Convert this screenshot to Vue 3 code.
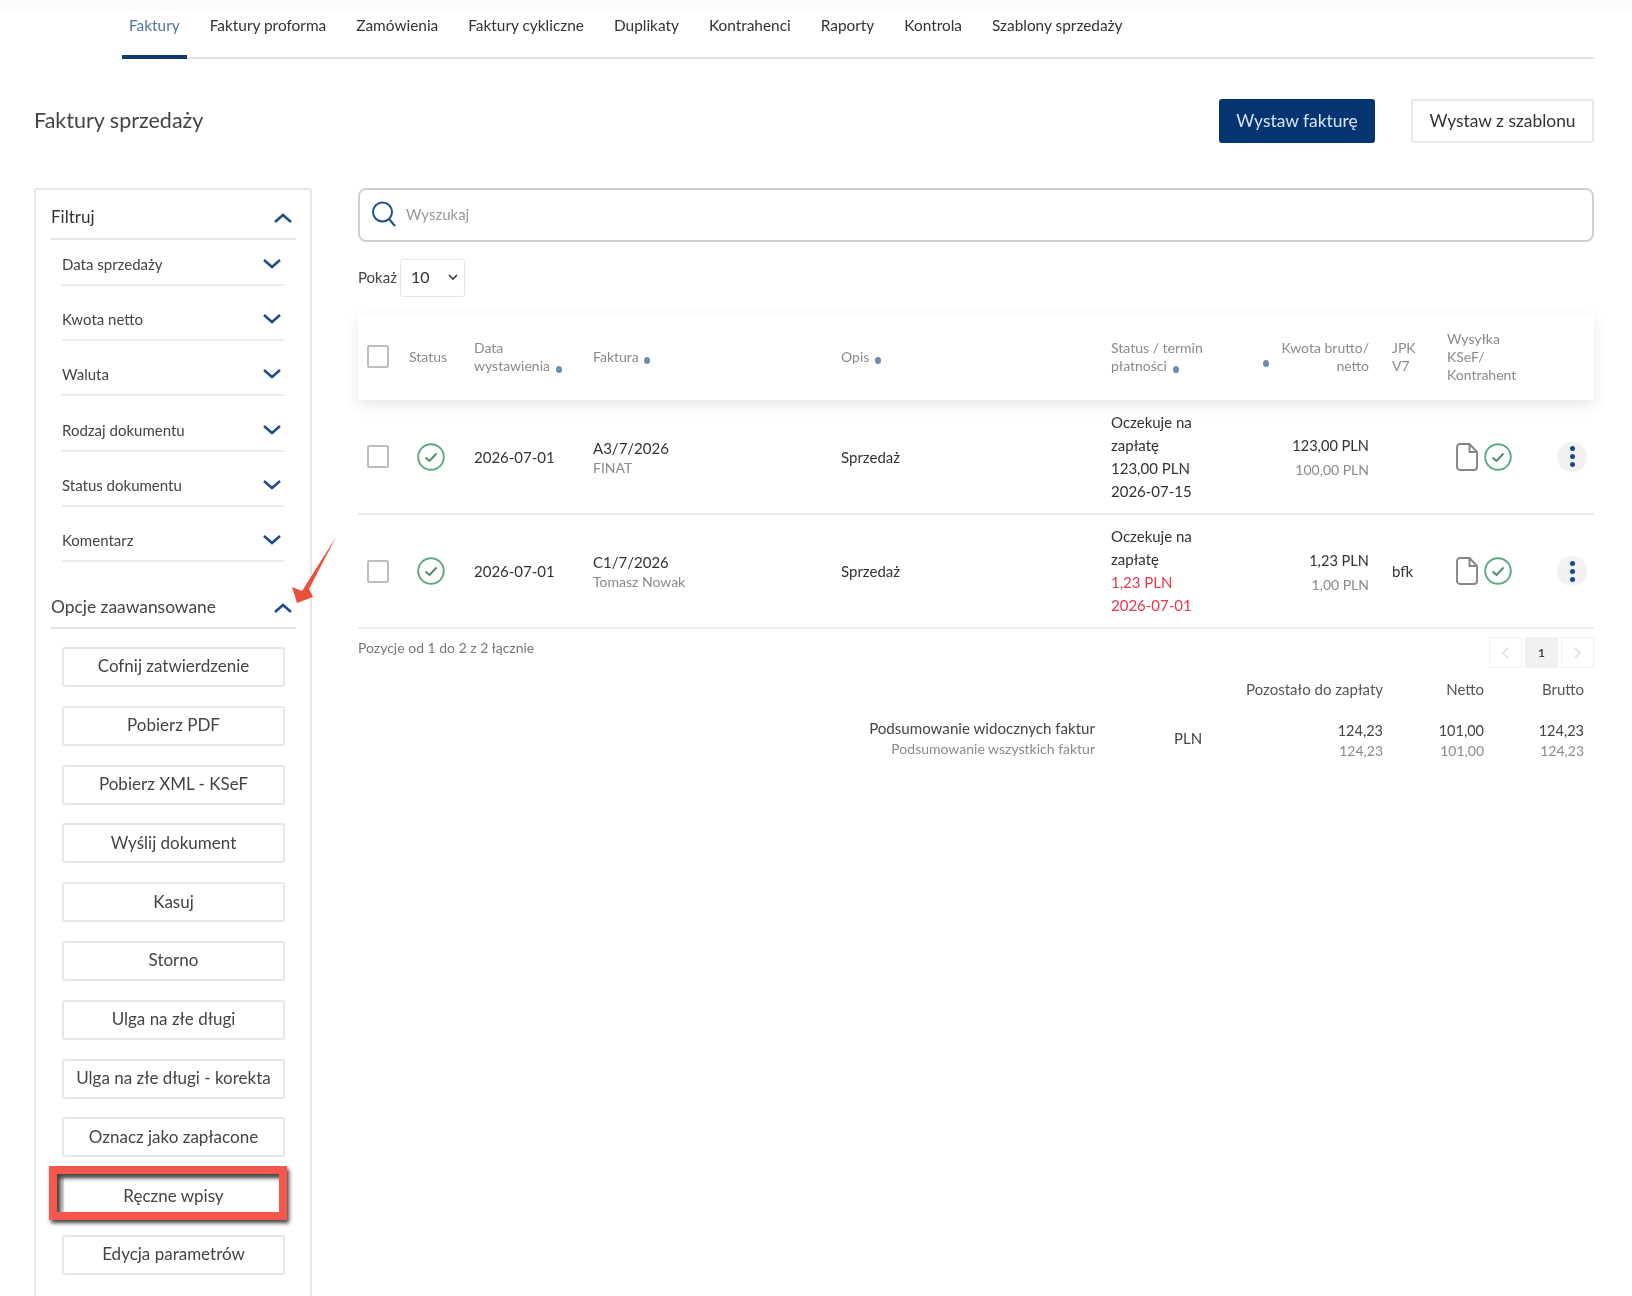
<template>
  <div class="page">
    <nav class="tabs">
      <a v-for="(tab, i) in tabs" :key="tab" class="tab" :class="{ active: i === 0 }">{{ tab }}</a>
    </nav>

    <header class="top">
      <h1>Faktury sprzedaży</h1>
      <div class="top-actions">
        <button class="btn primary">Wystaw fakturę</button>
        <button class="btn">Wystaw z szablonu</button>
      </div>
    </header>

    <div class="main">
      <aside class="side">
        <div class="side-head">
          <span>Filtruj</span>
          <svg class="chev" viewBox="0 0 20 12"><path d="M2 10l8-7l8 7" /></svg>
        </div>
        <div v-for="f in filters" :key="f" class="filter">
          <span>{{ f }}</span>
          <svg class="chev" viewBox="0 0 20 12"><path d="M2 2l8 7l8-7" /></svg>
        </div>
        <div class="side-head advanced">
          <span>Opcje zaawansowane</span>
          <svg class="chev" viewBox="0 0 20 12"><path d="M2 10l8-7l8 7" /></svg>
        </div>
        <div class="side-btns">
          <div v-for="a in actions" :key="a" class="side-btn">
            {{ a }}
            <i v-if="a === 'Ręczne wpisy'" class="mark"></i>
          </div>
        </div>
      </aside>

      <section class="content">
        <div class="search">
          <svg width="28" height="28" viewBox="0 0 28 28" fill="none" stroke="#1f5288" stroke-width="2">
            <circle cx="12.5" cy="12" r="9.5" />
            <path d="M19 19l6 7" />
          </svg>
          <span>Wyszukaj</span>
        </div>

        <div class="show">
          <span>Pokaż</span>
          <div class="select">
            10
            <svg width="10" height="6" viewBox="0 0 10 6" fill="none" stroke="#333" stroke-width="1.6"><path d="M1 1l4 4l4-4" /></svg>
          </div>
        </div>

        <table class="grid">
          <colgroup>
            <col v-for="(w, i) in cols" :key="i" :style="{ width: w + 'px' }" />
          </colgroup>
          <thead>
            <tr>
              <th class="c-check"><span class="check"></span></th>
              <th>Status</th>
              <th>Data<br />wystawienia <i class="dot"></i></th>
              <th>Faktura <i class="dot"></i></th>
              <th>Opis <i class="dot"></i></th>
              <th>Status / termin<br />płatności <i class="dot"></i></th>
              <th class="c-amount">
                <i class="dot dot-left"></i>
                Kwota brutto/<br />netto
              </th>
              <th>JPK<br />V7</th>
              <th>Wysyłka<br />KSeF/<br />Kontrahent</th>
              <th></th>
            </tr>
          </thead>
          <tbody>
            <tr v-for="r in rows" :key="r.no">
              <td class="c-check"><span class="check"></span></td>
              <td>
                <svg class="ok" viewBox="0 0 28 28"><circle cx="14" cy="14" r="12.8" /><path class="tick" d="M8.5 14.5l4 3.5l7-7.5" /></svg>
              </td>
              <td>{{ r.date }}</td>
              <td>
                <div class="no">{{ r.no }}</div>
                <div class="sub">{{ r.client }}</div>
              </td>
              <td>Sprzedaż</td>
              <td class="state" :class="{ late: r.late }">
                <div>Oczekuje na zapłatę</div>
                <div class="due">{{ r.left }}</div>
                <div class="due">{{ r.term }}</div>
              </td>
              <td class="c-amount">
                <div class="gross">{{ r.gross }}</div>
                <div class="sub">{{ r.net }}</div>
              </td>
              <td>{{ r.jpk }}</td>
              <td>
                <div class="icons">
                  <svg class="doc" viewBox="0 0 22 28"><path d="M4 1h9.5l7.500 8v15a3 3 0 0 1-3 3h-14a3 3 0 0 1-3-3v-20a3 3 0 0 1 3-3zM13.500 1v8h7.500" /></svg>
                  <svg class="ok" viewBox="0 0 28 28"><circle cx="14" cy="14" r="12.8" /><path class="tick" d="M8.5 14.5l4 3.5l7-7.5" /></svg>
                </div>
              </td>
              <td>
                <span class="more"><b></b><b></b><b></b></span>
              </td>
            </tr>
          </tbody>
        </table>

        <div class="under">
          <span class="count">Pozycje od 1 do 2 z 2 łącznie</span>
          <div class="pager">
            <span class="pg">
              <svg width="7" height="12" viewBox="0 0 7 12" fill="none" stroke="#ddd" stroke-width="1.5"><path d="M6 1l-5 5l5 5" /></svg>
            </span>
            <span class="pg cur">1</span>
            <span class="pg">
              <svg width="7" height="12" viewBox="0 0 7 12" fill="none" stroke="#ddd" stroke-width="1.5"><path d="M1 1l5 5l-5 5" /></svg>
            </span>
          </div>
        </div>

        <div class="summary">
          <span></span>
          <span></span>
          <span class="s-head">Pozostało do zapłaty</span>
          <span class="s-head">Netto</span>
          <span class="s-head">Brutto</span>

          <div class="s-label">
            <div class="s-main">Podsumowanie widocznych faktur</div>
            <div class="s-sub">Podsumowanie wszystkich faktur</div>
          </div>
          <div class="s-cur">PLN</div>
          <div v-for="(v, i) in totals" :key="i" class="s-val">
            <div class="s-main">{{ v }}</div>
            <div class="s-sub">{{ v }}</div>
          </div>
        </div>
      </section>
    </div>

    <svg class="arrow" width="60" height="76" viewBox="0 0 60 76">
      <path d="M48 1L21 53L25 61L9 67L4 51L14 55Z" fill="#e8503a" />
    </svg>
  </div>
</template>

<script setup>
const tabs = [
  "Faktury",
  "Faktury proforma",
  "Zamówienia",
  "Faktury cykliczne",
  "Duplikaty",
  "Kontrahenci",
  "Raporty",
  "Kontrola",
  "Szablony sprzedaży",
];

const filters = [
  "Data sprzedaży",
  "Kwota netto",
  "Waluta",
  "Rodzaj dokumentu",
  "Status dokumentu",
  "Komentarz",
];

const actions = [
  "Cofnij zatwierdzenie",
  "Pobierz PDF",
  "Pobierz XML - KSeF",
  "Wyślij dokument",
  "Kasuj",
  "Storno",
  "Ulga na złe długi",
  "Ulga na złe długi - korekta",
  "Oznacz jako zapłacone",
  "Ręczne wpisy",
  "Edycja parametrów",
];

const cols = [51, 65, 119, 248, 270, 139, 142, 55, 103, 44];

const rows = [
  {
    date: "2026-07-01",
    no: "A3/7/2026",
    client: "FINAT",
    left: "123,00 PLN",
    term: "2026-07-15",
    gross: "123,00 PLN",
    net: "100,00 PLN",
    jpk: "",
    late: false,
  },
  {
    date: "2026-07-01",
    no: "C1/7/2026",
    client: "Tomasz Nowak",
    left: "1,23 PLN",
    term: "2026-07-01",
    gross: "1,23 PLN",
    net: "1,00 PLN",
    jpk: "bfk",
    late: true,
  },
];

const totals = ["124,23", "101,00", "124,23"];
</script>

<style>
body {
  background: #fff;
}
</style>

<style scoped>
.page {
  position: relative;
  box-sizing: border-box;
  height: 1296px;
  overflow: hidden;
  padding: 0 38px 0 34px;
  font-family: Lato, "Liberation Sans", sans-serif;
  font-size: 15px;
  color: #333;
  background: linear-gradient(#fbfbfb 8px, #fff 13px);
  filter: blur(0.6px);
}

.tabs {
  display: flex;
  gap: 16px;
  height: 59px;
  margin-left: 88px;
  box-sizing: border-box;
  border-bottom: 2px solid #e2e2e2;
}

.tab {
  height: 59px;
  box-sizing: border-box;
  padding: 16px 7px 0;
  font-size: 15.4px;
  color: #333;
}

.tab.active {
  color: #4f76a3;
  border-bottom: 4px solid #0d3a75;
}

.top {
  display: flex;
  justify-content: space-between;
  align-items: center;
  margin-top: 40px;
}

h1 {
  margin: 0 0 2px;
  font-size: 21.5px;
  font-weight: 400;
  color: #444;
}

.top-actions {
  display: flex;
  gap: 36px;
}

.btn {
  box-sizing: border-box;
  width: 183px;
  height: 44px;
  padding: 0 0 2px;
  font: inherit;
  font-size: 17.4px;
  white-space: nowrap;
  color: #333;
  background: #fff;
  border: 2px solid #e8e8e8;
  border-radius: 3px;
}

.btn.primary {
  width: 156px;
  color: #d9e4f0;
  background: #053472;
  border-color: #053472;
}

.main {
  display: flex;
  gap: 46px;
  margin-top: 45px;
}

.side {
  flex: none;
  box-sizing: border-box;
  width: 278px;
  height: 1200px;
  padding: 0 14px 0 15px;
  border: 2px solid #e6e6e6;
  border-radius: 3px;
}

.side-head {
  display: flex;
  justify-content: space-between;
  align-items: flex-end;
  box-sizing: border-box;
  height: 50px;
  padding: 0 3px 11px 0;
  border-bottom: 2px solid #e6e6e6;
  font-size: 17px;
  color: #333;
}

.side-head.advanced {
  height: 67px;
  padding-bottom: 10px;
  font-size: 17.4px;
  color: #444;
}

.filter {
  display: flex;
  justify-content: space-between;
  align-items: flex-end;
  box-sizing: border-box;
  height: 55.2px;
  margin: 0 12px 0 11px;
  padding: 0 2px 11px 0;
  border-bottom: 2px solid #ececec;
  font-size: 15px;
  color: #444;
}

.filter:nth-child(2) {
  height: 46px;
}

.chev {
  width: 20px;
  height: 12px;
  margin-bottom: 3px;
  fill: none;
  stroke: #1d4d85;
  stroke-width: 2.5;
}

.side-btns {
  display: flex;
  flex-direction: column;
  gap: 18.8px;
  margin: 18px 0 0 11px;
  width: 223px;
}

.side-btn {
  position: relative;
  display: flex;
  justify-content: center;
  align-items: center;
  box-sizing: border-box;
  height: 40px;
  padding-bottom: 2px;
  font-size: 17px;
  color: #444;
  background: #fff;
  border: 2px solid #e6e6e6;
  border-radius: 3px;
}

.mark {
  position: absolute;
  top: -12px;
  left: -15px;
  box-sizing: border-box;
  width: 238px;
  height: 54px;
  border: 8px solid #f5574c;
  box-shadow: 2px 3px 4px rgba(0, 0, 0, 0.75), inset 4px 4px 4px rgba(0, 0, 0, 0.75);
}

.content {
  flex: 1;
  min-width: 0;
}

.search {
  display: flex;
  align-items: center;
  gap: 8px;
  box-sizing: border-box;
  height: 54px;
  padding: 0 0 3px 10px;
  font-size: 15px;
  color: #999;
  border: 2px solid #cfcfcf;
  border-radius: 8px;
}

.show {
  display: flex;
  align-items: center;
  gap: 3px;
  margin-top: 17px;
  font-size: 15px;
  color: #444;
}

.show > span {
  margin-bottom: 3px;
}

.select {
  display: flex;
  justify-content: space-between;
  align-items: center;
  box-sizing: border-box;
  width: 65px;
  height: 38px;
  padding: 0 6px 3px 10px;
  font-size: 16px;
  color: #333;
  border: 1px solid #e6e6e6;
  border-radius: 3px;
}

.grid {
  width: 1236px;
  margin-top: 18px;
  border-collapse: collapse;
  table-layout: fixed;
  font-size: 15px;
}

.grid thead tr {
  height: 85px;
  box-shadow: 0 5px 14px rgba(0, 0, 0, 0.1);
}

.grid th {
  padding: 0 0 2px;
  font-size: 14px;
  font-weight: 400;
  line-height: 18px;
  text-align: left;
  color: #8a8a8a;
}

.grid td {
  box-sizing: border-box;
  height: 114px;
  padding: 0;
  border-bottom: 2px solid #ececec;
  color: #333;
}

.c-check {
  padding-left: 9px !important;
}

.check {
  display: block;
  box-sizing: border-box;
  width: 22px;
  height: 23px;
  border: 2px solid #bdbdbd;
  border-radius: 2px;
}

.dot {
  display: inline-block;
  width: 6px;
  height: 7px;
  margin-left: 2px;
  vertical-align: -2px;
  border-radius: 50%;
  background: #6a8db3;
}

.c-amount {
  position: relative;
  padding-right: 23px !important;
  text-align: right !important;
}

.dot-left {
  position: absolute;
  left: 13px;
  top: 45px;
  margin: 0;
}

.ok {
  display: block;
  width: 28px;
  height: 28px;
  margin-left: 8px;
  fill: none;
  stroke: #5aa97f;
  stroke-width: 1.9;
}

.ok .tick {
  stroke: #4d8a6b;
}

.no {
  line-height: 22px;
}

.sub {
  font-size: 14px;
  line-height: 18px;
  color: #8a8a8a;
}

.state {
  line-height: 23px;
}

.state > div:first-child {
  width: 110px;
}

.state.late .due {
  color: #e8364f;
}

.gross {
  line-height: 24px;
  margin-bottom: 3px;
  font-size: 14.6px;
}

.icons {
  display: flex;
  align-items: center;
  gap: 6px;
  margin-left: 9px;
}

.icons .ok {
  margin-left: 0;
}

.doc {
  width: 22px;
  height: 28px;
  fill: none;
  stroke: #858585;
  stroke-width: 1.9;
}

.more {
  display: flex;
  flex-direction: column;
  align-items: center;
  justify-content: center;
  gap: 3px;
  width: 30px;
  height: 30px;
  margin-left: 7px;
  border-radius: 50%;
  background: #f1f1f1;
}

.more b {
  width: 5px;
  height: 5px;
  border-radius: 50%;
  background: #14498f;
}

.under {
  display: flex;
  justify-content: space-between;
  align-items: flex-start;
  margin-top: 8px;
}

.count {
  margin-top: 2px;
  font-size: 14px;
  color: #777;
}

.pager {
  display: flex;
  gap: 3px;
}

.pg {
  display: flex;
  justify-content: center;
  align-items: center;
  box-sizing: border-box;
  width: 33px;
  height: 31px;
  font-size: 12px;
  font-weight: 700;
  color: #444;
  border: 1px solid #f1f1f1;
}

.pg.cur {
  background: #f1f1f1;
}

.summary {
  display: grid;
  grid-template-columns: 737px 155px 133px 101px 100px;
  align-items: center;
  row-gap: 18px;
  margin-top: 12px;
  text-align: right;
}

.s-head {
  justify-self: end;
  font-size: 15px;
  white-space: nowrap;
  color: #555;
}

.s-main {
  font-size: 15.1px;
  line-height: 22px;
  color: #444;
}

.s-sub {
  font-size: 14px;
  line-height: 20px;
  color: #8a8a8a;
}

.s-val {
  margin-top: 4px;
}

.s-val .s-main {
  font-size: 14.5px;
}

.s-val .s-sub {
  line-height: 18px;
}

.s-cur {
  padding-left: 79px;
  font-size: 15px;
  text-align: left;
  color: #444;
}

.arrow {
  position: absolute;
  left: 288px;
  top: 536px;
}
</style>
